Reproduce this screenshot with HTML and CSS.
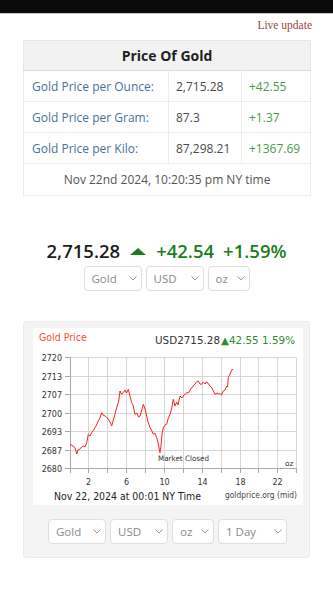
FILE: index.html
```html
<!DOCTYPE html>
<html>
<head>
<meta charset="utf-8">
<link rel="stylesheet" href="styles.css">
</head>
<body>
<div class="topbar"></div>
<div class="live">Live update</div>
<table class="gold">
  <colgroup><col class="c1"><col class="c2"><col class="c3"></colgroup>
  <tr><th colspan="3">Price Of Gold</th></tr>
  <tr><td class="lbl">Gold Price per Ounce:</td><td class="val">2,715.28</td><td class="chg">+42.55</td></tr>
  <tr><td class="lbl">Gold Price per Gram:</td><td class="val">87.3</td><td class="chg">+1.37</td></tr>
  <tr><td class="lbl">Gold Price per Kilo:</td><td class="val">87,298.21</td><td class="chg">+1367.69</td></tr>
  <tr><td class="foot" colspan="3">Nov 22nd 2024, 10:20:35 pm NY time</td></tr>
</table>

<div class="quote">
  <span class="q-price">2,715.28</span>
  <svg class="q-arrow" width="16" height="7" viewBox="0 0 16 7"><polygon points="8,0 16,7 0,7" fill="#1b7d1b"/></svg>
  <span class="q-up">+42.54</span>
  <span class="q-up">+1.59%</span>
</div>

<div class="selects">
  <div class="sel w-gold"><span>Gold</span><svg width="8" height="5" viewBox="0 0 8 5"><polyline points="0.5,0.5 4,4 7.5,0.5" fill="none" stroke="#999" stroke-width="1"/></svg></div>
  <div class="sel w-usd"><span>USD</span><svg width="8" height="5" viewBox="0 0 8 5"><polyline points="0.5,0.5 4,4 7.5,0.5" fill="none" stroke="#999" stroke-width="1"/></svg></div>
  <div class="sel w-oz"><span>oz</span><svg width="8" height="5" viewBox="0 0 8 5"><polyline points="0.5,0.5 4,4 7.5,0.5" fill="none" stroke="#999" stroke-width="1"/></svg></div>
</div>

<div class="card">
  <svg class="chart" width="270" height="177" viewBox="0 0 270 177">
    <rect x="0" y="0" width="270" height="177" fill="#fff"/>
    <text x="6" y="13" class="c-title" textLength="47.7" lengthAdjust="spacingAndGlyphs">Gold Price</text>
    <text y="16.3" class="c-quote"><tspan x="122" textLength="65" lengthAdjust="spacingAndGlyphs" fill="#333">USD2715.28</tspan><tspan x="188" textLength="74" lengthAdjust="spacingAndGlyphs" fill="#2e8b2e">▲42.55 1.59%</tspan></text>
    <path class="grid" d="M37.5 29.5H263.5M37.5 48.5H263.5M37.5 66.5H263.5M37.5 85.5H263.5M37.5 103.5H263.5M37.5 122.5H263.5M37.5 140.5H263.5
      M55.5 29.5V140.5M74.5 29.5V140.5M93.5 29.5V140.5M112.5 29.5V140.5M131.5 29.5V140.5M150.5 29.5V140.5M169.5 29.5V140.5M188.5 29.5V140.5M207.5 29.5V140.5M225.5 29.5V140.5M244.5 29.5V140.5M263.5 29.5V140.5"/>
    <path class="axis" d="M37.5 29.5V140.5H263.5
      M32 29.5H37.5M32 48.5H37.5M32 66.5H37.5M32 85.5H37.5M32 103.5H37.5M32 122.5H37.5M32 140.5H37.5
      M37.5 140.5V145M55.5 140.5V145M74.5 140.5V145M93.5 140.5V145M112.5 140.5V145M131.5 140.5V145M150.5 140.5V145M169.5 140.5V145M188.5 140.5V145M207.5 140.5V145M225.5 140.5V145M244.5 140.5V145M263.5 140.5V145"/>
    <g class="ylab">
      <text x="29" y="32.5">2720</text>
      <text x="29" y="51.5">2713</text>
      <text x="29" y="69.5">2707</text>
      <text x="29" y="88.5">2700</text>
      <text x="29" y="106.5">2693</text>
      <text x="29" y="125.5">2687</text>
      <text x="29" y="143.5">2680</text>
    </g>
    <g class="xlab">
      <text x="55.5" y="157">2</text>
      <text x="93.5" y="157">6</text>
      <text x="131.5" y="157">10</text>
      <text x="169.5" y="157">14</text>
      <text x="207.5" y="157">18</text>
      <text x="244.5" y="157">22</text>
    </g>
    <polyline class="line" points="37,116.3 40.3,118 42,120 43.7,126 45,122 47,121 48.5,119 50.3,118 52,119 53.7,114.7 55.3,106.3 57,108 58.7,104.7 60.5,102 62,99.7 63.5,97 65.3,93 67,90 68.7,84.7 70,87 72,88 73.5,89 75.3,91 77,94 78.7,98 80,93 82,86.3 83.5,80 85.3,74.7 86,71 87,63 88.5,66 90.3,64.7 92,62 93.5,65 95.3,61.3 97,68 98.7,74.7 100,77 102,86.3 104,85 105.5,89 107,88 108.5,83 110.3,76.3 112,81 113.7,88 115,94 117,99.7 118.5,102 120.3,106.3 122,105 123.7,109.7 125,114 126,120 127,124.7 128,118 129,106 130.3,99.7 132,97 133.7,96.3 135,91 137,86.3 138.5,81 140.3,71.3 142,78 143.7,74 145,77 147,68 149,70 151,67 153.7,64.7 155.5,65 157,62 160.3,58 162,56 163.5,54 165.3,53 167,56 168.7,56.3 170.5,54 172,56 173.7,53.7 175.5,56 177,58 178.7,59.7 180.3,63 182,66.3 184,65 185.5,66 187,65.7 188.5,67 190.3,63 192,62 193.7,58 194.5,59 195.3,49.7 197,46 198.7,42 200.3,41.3"/>
    <text x="125" y="132.5" class="c-small" textLength="51" lengthAdjust="spacingAndGlyphs">Market Closed</text>
    <text x="252" y="137.5" class="c-small">oz</text>
    <text x="21" y="171.5" class="c-date" textLength="147" lengthAdjust="spacingAndGlyphs">Nov 22, 2024 at 00:01 NY Time</text>
    <text x="192" y="170" class="c-src" textLength="72" lengthAdjust="spacingAndGlyphs">goldprice.org (mid)</text>
  </svg>
  <div class="selects in-card">
    <div class="sel w-gold"><span>Gold</span><svg width="8" height="5" viewBox="0 0 8 5"><polyline points="0.5,0.5 4,4 7.5,0.5" fill="none" stroke="#999" stroke-width="1"/></svg></div>
    <div class="sel w-usd"><span>USD</span><svg width="8" height="5" viewBox="0 0 8 5"><polyline points="0.5,0.5 4,4 7.5,0.5" fill="none" stroke="#999" stroke-width="1"/></svg></div>
    <div class="sel w-oz"><span>oz</span><svg width="8" height="5" viewBox="0 0 8 5"><polyline points="0.5,0.5 4,4 7.5,0.5" fill="none" stroke="#999" stroke-width="1"/></svg></div>
    <div class="sel w-day"><span>1 Day</span><svg width="8" height="5" viewBox="0 0 8 5"><polyline points="0.5,0.5 4,4 7.5,0.5" fill="none" stroke="#999" stroke-width="1"/></svg></div>
  </div>
</div>

<div class="rule"></div>
</body>
</html>
```
FILE: styles.css
```css
html, body {
  margin: 0;
  padding: 0;
  background: #fff;
}
body {
  font-family: "Open Sans", "Noto Sans", sans-serif;
  color: #333;
}
.topbar {
  height: 13px;
  background: #0b0b0b;
  border-bottom: 1px solid #c4c4c4;
}
.live {
  margin-top: 4px;
  padding-right: 21px;
  text-align: right;
  font-family: "Liberation Serif", "DejaVu Serif", serif;
  font-size: 11.5px;
  line-height: 14px;
  color: #9a4545;
}
.gold {
  margin: 8px 23px 0;
  width: 287px;
  border-collapse: collapse;
  border: 1px solid #e6e6e6;
  font-size: 12px;
  table-layout: fixed;
}
.gold col.c1 { width: 145px; }
.gold col.c2 { width: 73px; }
.gold col.c3 { width: 69px; }
.gold th {
  height: 29px;
  padding: 0;
  background: #f2f2f2;
  font-size: 14px;
  font-weight: 700;
  color: #1e1e1e;
  border-bottom: 1px solid #dcdcdc;
}
.gold td {
  height: 30px;
  padding: 0 0 0 7px;
  border: 1px solid #ececec;
  white-space: nowrap;
}
.gold td.lbl {
  padding-left: 8px;
  color: #46729b;
}
.gold td.val {
  color: #4a4a4a;
}
.gold td.chg {
  color: #4a9a4a;
}
.gold td.foot {
  height: 31px;
  padding: 0;
  text-align: center;
  color: #555;
}
.quote {
  margin-top: 44px;
  display: flex;
  justify-content: center;
  align-items: baseline;
  gap: 9px;
  font-size: 18.5px;
  line-height: 22px;
  font-weight: 600;
}
.q-price {
  color: #1c1c1c;
}
.q-arrow {
  align-self: center;
  margin: 0 1px;
}
.q-up {
  color: #1b7d1b;
}
.selects {
  display: flex;
  justify-content: center;
  gap: 4px;
  margin-top: 4px;
}
.sel {
  box-sizing: border-box;
  height: 25px;
  border: 1px solid #dedede;
  border-radius: 4px;
  background: #fff;
  display: flex;
  align-items: center;
  justify-content: space-between;
  padding: 0 4px 0 7px;
  font-size: 11.5px;
  color: #8a8a8a;
}
.w-gold { width: 58px; }
.w-usd { width: 58px; }
.w-oz { width: 42px; }
.w-day { width: 69px; }
.card {
  margin: 30px 23px 0;
  background: #f4f4f4;
  border: 1px solid #ebebeb;
  border-radius: 3px;
  padding: 6px 0 13px;
}
.chart {
  display: block;
  margin-left: 9px;
}
.selects.in-card {
  margin-top: 13.5px;
  padding-left: 2px;
}
.grid {
  fill: none;
  stroke: #d6d6d6;
  stroke-width: 1;
}
.axis {
  fill: none;
  stroke: #a8a8a8;
  stroke-width: 1;
}
.line {
  fill: none;
  stroke: #ff1f1f;
  stroke-width: 1;
  stroke-linejoin: round;
}
.chart text {
  font-family: "DejaVu Sans", Verdana, sans-serif;
}
.c-title {
  font-size: 11px;
  fill: #ff4a3a;
}
.c-quote {
  font-size: 10px;
}
.ylab text {
  font-size: 8px;
  fill: #333;
  text-anchor: end;
}
.xlab text {
  font-size: 8px;
  fill: #333;
  text-anchor: middle;
}
.c-small {
  font-size: 7.5px;
  fill: #333;
}
.c-date {
  font-size: 11px;
  fill: #222;
}
.c-src {
  font-size: 8px;
  fill: #444;
}
.rule {
  margin: 34px 25px 0;
  border-top: 1px solid #e6e6e6;
}
```
